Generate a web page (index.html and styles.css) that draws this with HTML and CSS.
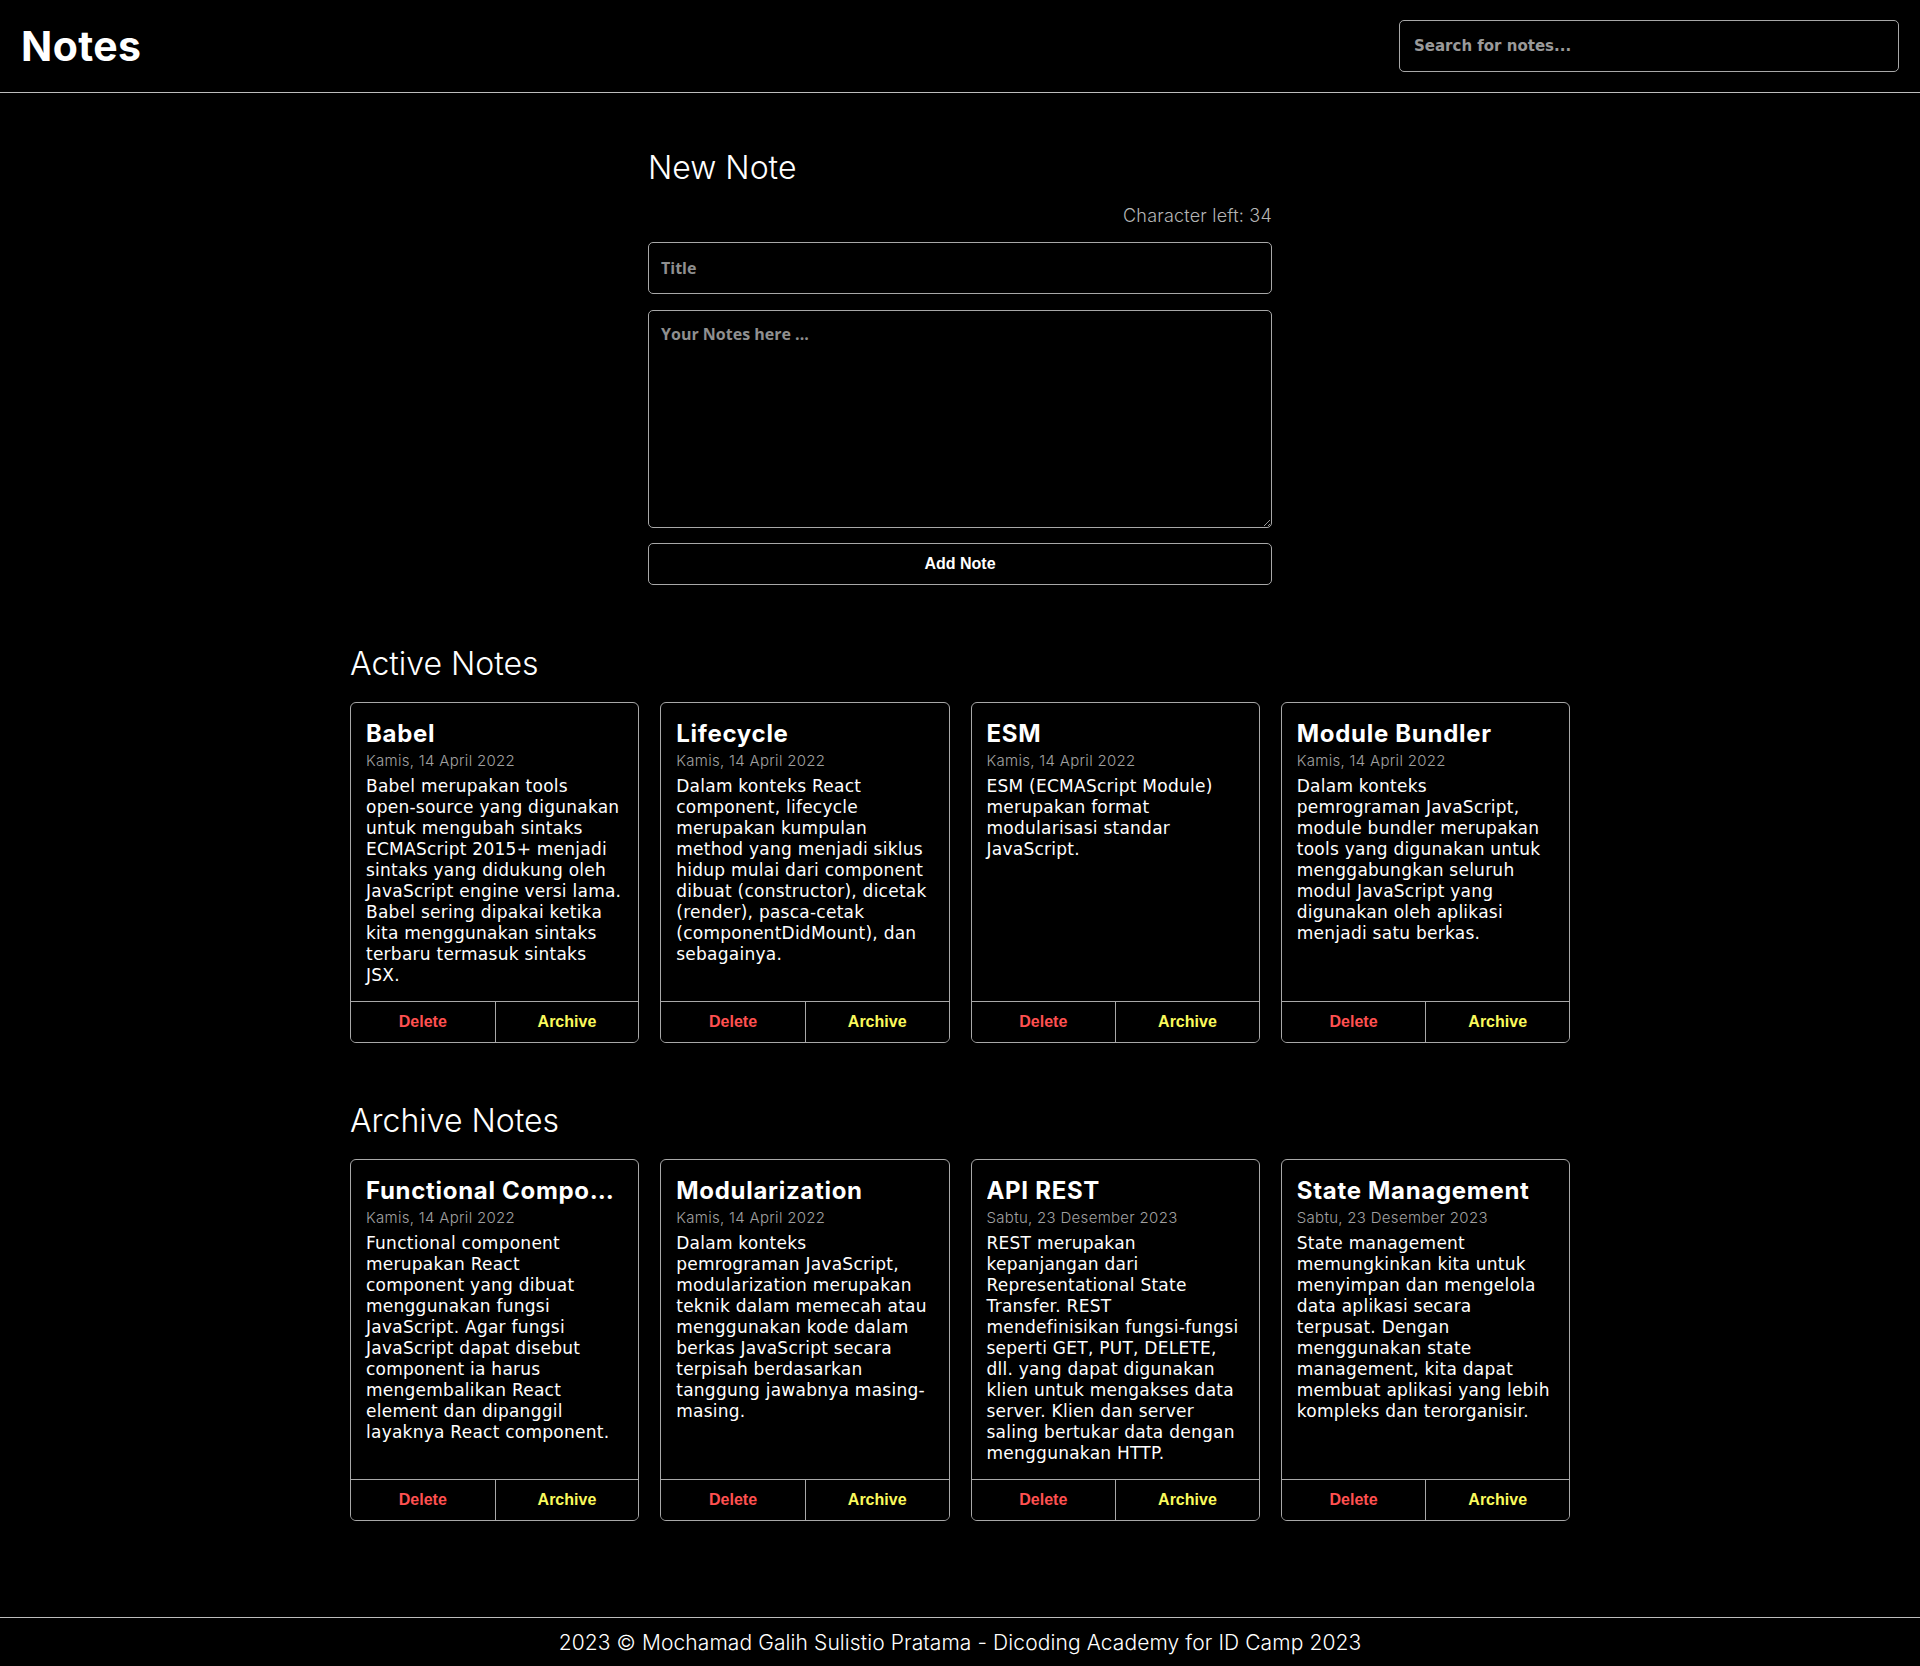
FILE: index.html
```html
<!DOCTYPE html>
<html lang="id">
<head>
<meta charset="utf-8">
<title>Notes</title>
<link rel="stylesheet" href="styles.css">
</head>
<body>
<header class="app-header">
  <h1 class="brand">Notes</h1>
  <input class="search" type="text" placeholder="Search for notes...">
</header>
<main class="app-body">
  <section class="note-input">
    <h2 class="section-title">New Note</h2>
    <p class="char-left">Character left: 34</p>
    <form class="note-form">
      <input class="field field-title" type="text" placeholder="Title">
      <textarea class="field field-body" placeholder="Your Notes here ..."></textarea>
      <button class="add-btn" type="button">Add Note</button>
    </form>
  </section>

  <section class="notes-section">
    <h2 class="section-title">Active Notes</h2>
    <div class="notes-grid">
      <article class="note-card">
        <div class="note-content">
          <h3 class="note-title">Babel</h3>
          <p class="note-date">Kamis, 14 April 2022</p>
          <p class="note-body">Babel merupakan tools open-source yang digunakan untuk mengubah sintaks ECMAScript 2015+ menjadi sintaks yang didukung oleh JavaScript engine versi lama. Babel sering dipakai ketika kita menggunakan sintaks terbaru termasuk sintaks JSX.</p>
        </div>
        <div class="note-actions">
          <button class="action action-delete" type="button">Delete</button>
          <button class="action action-archive" type="button">Archive</button>
        </div>
      </article>
      <article class="note-card">
        <div class="note-content">
          <h3 class="note-title">Lifecycle</h3>
          <p class="note-date">Kamis, 14 April 2022</p>
          <p class="note-body">Dalam konteks React component, lifecycle merupakan kumpulan method yang menjadi siklus hidup mulai dari component dibuat (constructor), dicetak (render), pasca-cetak (componentDidMount), dan sebagainya.</p>
        </div>
        <div class="note-actions">
          <button class="action action-delete" type="button">Delete</button>
          <button class="action action-archive" type="button">Archive</button>
        </div>
      </article>
      <article class="note-card">
        <div class="note-content">
          <h3 class="note-title">ESM</h3>
          <p class="note-date">Kamis, 14 April 2022</p>
          <p class="note-body">ESM (ECMAScript Module) merupakan format modularisasi standar JavaScript.</p>
        </div>
        <div class="note-actions">
          <button class="action action-delete" type="button">Delete</button>
          <button class="action action-archive" type="button">Archive</button>
        </div>
      </article>
      <article class="note-card">
        <div class="note-content">
          <h3 class="note-title">Module Bundler</h3>
          <p class="note-date">Kamis, 14 April 2022</p>
          <p class="note-body">Dalam konteks pemrograman JavaScript, module bundler merupakan tools yang digunakan untuk menggabungkan seluruh modul JavaScript yang digunakan oleh aplikasi menjadi satu berkas.</p>
        </div>
        <div class="note-actions">
          <button class="action action-delete" type="button">Delete</button>
          <button class="action action-archive" type="button">Archive</button>
        </div>
      </article>
    </div>
  </section>

  <section class="notes-section">
    <h2 class="section-title">Archive Notes</h2>
    <div class="notes-grid">
      <article class="note-card">
        <div class="note-content">
          <h3 class="note-title">Functional Component</h3>
          <p class="note-date">Kamis, 14 April 2022</p>
          <p class="note-body">Functional component merupakan React component yang dibuat menggunakan fungsi JavaScript. Agar fungsi JavaScript dapat disebut component ia harus mengembalikan React element dan dipanggil layaknya React component.</p>
        </div>
        <div class="note-actions">
          <button class="action action-delete" type="button">Delete</button>
          <button class="action action-archive" type="button">Archive</button>
        </div>
      </article>
      <article class="note-card">
        <div class="note-content">
          <h3 class="note-title">Modularization</h3>
          <p class="note-date">Kamis, 14 April 2022</p>
          <p class="note-body">Dalam konteks pemrograman JavaScript, modularization merupakan teknik dalam memecah atau menggunakan kode dalam berkas JavaScript secara terpisah berdasarkan tanggung jawabnya masing-masing.</p>
        </div>
        <div class="note-actions">
          <button class="action action-delete" type="button">Delete</button>
          <button class="action action-archive" type="button">Archive</button>
        </div>
      </article>
      <article class="note-card">
        <div class="note-content">
          <h3 class="note-title">API REST</h3>
          <p class="note-date">Sabtu, 23 Desember 2023</p>
          <p class="note-body">REST merupakan kepanjangan dari Representational State Transfer. REST mendefinisikan fungsi-fungsi seperti GET, PUT, DELETE, dll. yang dapat digunakan klien untuk mengakses data server. Klien dan server saling bertukar data dengan menggunakan HTTP.</p>
        </div>
        <div class="note-actions">
          <button class="action action-delete" type="button">Delete</button>
          <button class="action action-archive" type="button">Archive</button>
        </div>
      </article>
      <article class="note-card">
        <div class="note-content">
          <h3 class="note-title">State Management</h3>
          <p class="note-date">Sabtu, 23 Desember 2023</p>
          <p class="note-body">State management memungkinkan kita untuk menyimpan dan mengelola data aplikasi secara terpusat. Dengan menggunakan state management, kita dapat membuat aplikasi yang lebih kompleks dan terorganisir.</p>
        </div>
        <div class="note-actions">
          <button class="action action-delete" type="button">Delete</button>
          <button class="action action-archive" type="button">Archive</button>
        </div>
      </article>
    </div>
  </section>
</main>
<footer class="app-footer">
  <p>2023 © Mochamad Galih Sulistio Pratama - Dicoding Academy for ID Camp 2023</p>
</footer>
</body>
</html>
```

FILE: styles.css
```css
* {
  box-sizing: border-box;
}

body {
  margin: 0;
  background: #000;
  color: #fff;
  font-family: "DejaVu Sans", "Noto Sans", sans-serif;
}

.app-header {
  display: flex;
  align-items: center;
  justify-content: space-between;
  padding: 20px 21px;
  border-bottom: 1px solid #bdbdbd;
}

.brand {
  margin: 0;
  font-family: Inter, "Noto Sans", sans-serif;
  font-weight: 700;
  font-size: 41px;
  line-height: 48px;
  letter-spacing: 0.4px;
}

.search {
  width: 500px;
  height: 52px;
  padding: 0 14px;
  background: #000;
  color: #fff;
  border: 1px solid #a8a8a8;
  border-radius: 5px;
  font-family: "DejaVu Sans", sans-serif;
  font-weight: 700;
  font-size: 15px;
  outline: none;
}

.search::placeholder {
  color: #9a9a9a;
}

.app-body {
  padding-bottom: 96px;
}

.note-input {
  width: 624px;
  margin: 0 auto;
  padding-top: 55px;
}

.section-title {
  margin: 0;
  font-family: Inter, "Noto Sans", sans-serif;
  font-weight: 300;
  font-size: 32px;
  line-height: 39px;
}

.char-left {
  margin: 19px 0 0;
  text-align: right;
  font-family: Inter, "Noto Sans", sans-serif;
  font-weight: 300;
  font-size: 18px;
  line-height: 20px;
  letter-spacing: 0.2px;
  color: #b5b5b5;
}

.note-form {
  display: flex;
  flex-direction: column;
  margin-top: 16px;
}

.field {
  width: 100%;
  background: #000;
  color: #fff;
  border: 1px solid #a8a8a8;
  border-radius: 5px;
  padding: 0 12px;
  font-family: "Open Sans", "Noto Sans", sans-serif;
  font-weight: 700;
  font-size: 16px;
  outline: none;
}

.field::placeholder {
  color: #8f8f8f;
}

.field-title {
  height: 52px;
}

.field-body {
  height: 218px;
  margin-top: 16px;
  padding-top: 12px;
  resize: vertical;
}

.add-btn {
  height: 42px;
  margin-top: 15px;
  background: #000;
  color: #fff;
  border: 1px solid #a8a8a8;
  border-radius: 5px;
  font-family: "Liberation Sans", Arial, sans-serif;
  font-weight: 700;
  font-size: 16px;
}

.notes-section {
  width: 1220px;
  margin: 59px auto 0;
}

.notes-section + .notes-section {
  margin-top: 58px;
}

.notes-grid {
  display: grid;
  grid-template-columns: repeat(4, 1fr);
  gap: 21px;
  margin-top: 19px;
}

.note-card {
  display: flex;
  flex-direction: column;
  border: 1px solid #a8a8a8;
  border-radius: 6px;
  overflow: hidden;
}

.note-content {
  flex: 1;
  padding: 16px 15px 15px;
  min-width: 0;
}

.note-title {
  margin: 0;
  font-family: Inter, "Noto Sans", sans-serif;
  font-weight: 700;
  font-size: 24px;
  line-height: 29px;
  letter-spacing: 0.7px;
  white-space: nowrap;
  overflow: hidden;
  text-overflow: ellipsis;
}

.note-date {
  margin: 4px 0 0;
  font-family: Inter, "Noto Sans", sans-serif;
  font-weight: 300;
  font-size: 15px;
  line-height: 18px;
  letter-spacing: 0.3px;
  color: #a0a0a0;
}

.note-body {
  margin: 6px 0 0;
  font-family: "DejaVu Sans", sans-serif;
  font-size: 17px;
  line-height: 21px;
  letter-spacing: 0.25px;
}

.note-actions {
  display: grid;
  grid-template-columns: 1fr 1fr;
  border-top: 1px solid #a8a8a8;
}

.action {
  height: 40px;
  background: #000;
  border: 0;
  font-family: "Liberation Sans", Arial, sans-serif;
  font-weight: 700;
  font-size: 16px;
}

.action + .action {
  border-left: 1px solid #a8a8a8;
}

.action-delete {
  color: #ff5050;
}

.action-archive {
  color: #fafa5c;
}

.app-footer {
  border-top: 1px solid #bdbdbd;
  text-align: center;
}

.app-footer p {
  margin: 0;
  padding: 13px 0 12px;
  font-family: Inter, "Noto Sans", sans-serif;
  font-weight: 300;
  font-size: 21px;
  line-height: 24px;
  letter-spacing: 0.1px;
}
```
